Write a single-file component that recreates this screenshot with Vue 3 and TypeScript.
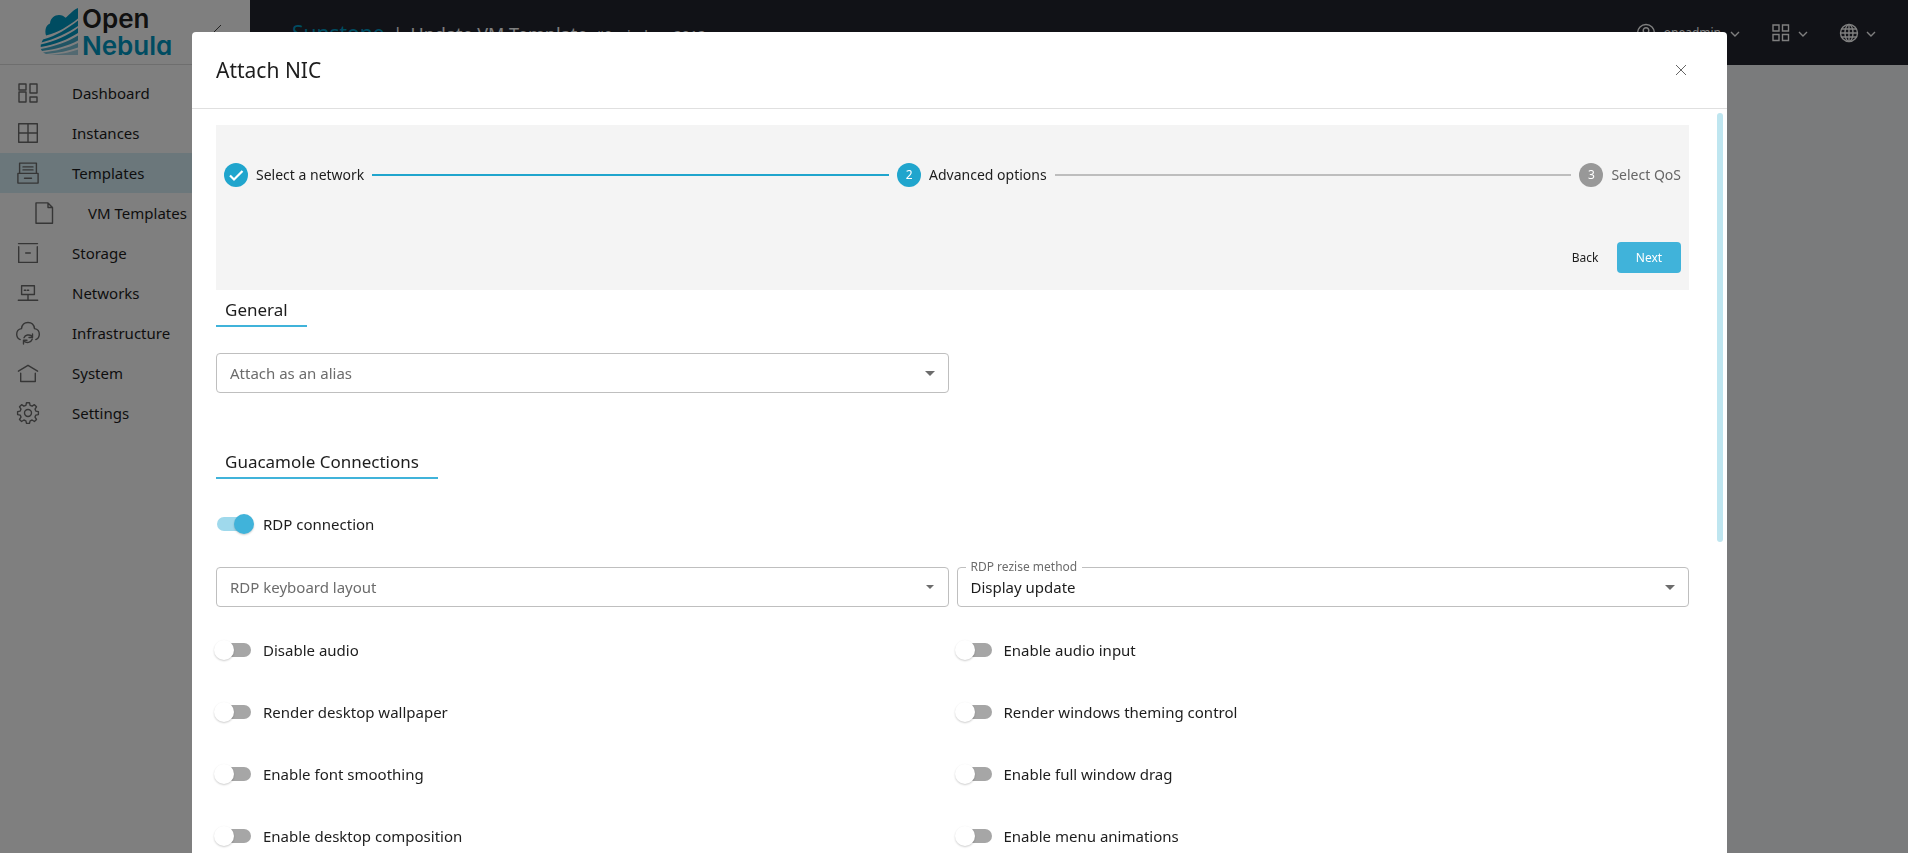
<script setup lang="ts">
import { ref } from 'vue'

interface NavItem {
  label: string
  icon: string
  selected?: boolean
  child?: boolean
}

const nav: NavItem[] = [
  { label: 'Dashboard', icon: 'dashboard' },
  { label: 'Instances', icon: 'instances' },
  { label: 'Templates', icon: 'templates', selected: true },
  { label: 'VM Templates', icon: 'page', child: true },
  { label: 'Storage', icon: 'storage' },
  { label: 'Networks', icon: 'networks' },
  { label: 'Infrastructure', icon: 'infrastructure' },
  { label: 'System', icon: 'system' },
  { label: 'Settings', icon: 'settings' },
]

const icons: Record<string, string> = {
  dashboard: 'M3 3h7v6H3zM3 11h7v10H3zM14 3h7v9h-7zM14 16h7v5h-7z',
  instances: 'M2.7 2.7h18.6v18.6H2.7zM12 2.7v18.6M2.7 12h18.6',
  templates: 'M1.9 12.4h20.2v9.7H1.9zM3.6 12.4V2.1h16.8v10.3M7 5.9h10M7 8.9h10M8.5 17.2h7',
  page: 'M4 1.9h12l4.5 4.6v15.7H4zM16 1.9v4.6h4.5',
  storage: 'M2.5 2.6h19M2.7 5.8v15.6h18.6V5.8M9.7 12h4.6',
  networks: 'M5.6 4.7h12.8v8.8H5.6zM12 13.5v5.7M2.3 19.2h19.4M8.3 9.2h1.4M11.3 9.2h1.4',
  infrastructure:
    'M4.2 18.6C1.8 17.6.7 15.4.7 13.2c0-3 2-5.1 4.8-5.6C6 3.8 8.7 1.5 12 1.5s6 2.3 6.500 6.100c2.800.5 4.800 2.600 4.800 5.600 0 2.200-1.100 4.400-3.500 5.400M8 16.800c1.200-3 5.300-3.800 7.900-1.600M16.500 13v3.500H13M16.200 18.200c-1.200 3.400-5.600 4.300-8.300 1.800M7.500 23v-3.800H11',
  system: 'M2.4 10.2 12 4.3l9.6 5.9M4.7 12.3v8.2h14.6v-8.2',
  settings:
    'M10.5 1.7h3l.6 2.7 2 .8 2.300-1.500 2.100 2.100L19 8.100l.8 2 2.600.5v3l-2.600.5-.8 2 1.500 2.300-2.100 2.100-2.300-1.500-2 .8-.6 2.600h-3l-.6-2.600-2-.8-2.300 1.500-2.100-2.100L5 16.100l-.8-2-2.600-.5v-3l2.600-.5.8-2-1.500-2.300 2.100-2.100 2.300 1.500 2-.8zM12 8.500a3.500 3.500 0 1 0 0 7 3.500 3.500 0 0 0 0-7z',
}

const rdp = ref(true)
const aliasOf = ref('')
const keyboard = ref('')
const resize = ref('display-update')

const options = ref([
  { id: 'disable-audio', label: 'Disable audio', on: false },
  { id: 'audio-input', label: 'Enable audio input', on: false },
  { id: 'wallpaper', label: 'Render desktop wallpaper', on: false },
  { id: 'theming', label: 'Render windows theming control', on: false },
  { id: 'font-smoothing', label: 'Enable font smoothing', on: false },
  { id: 'window-drag', label: 'Enable full window drag', on: false },
  { id: 'composition', label: 'Enable desktop composition', on: false },
  { id: 'menu-animations', label: 'Enable menu animations', on: false },
])
</script>

<template>
  <div class="app">
    <aside class="sidebar">
      <div class="brand">
        <svg class="brand-mark" viewBox="0 0 38 48" aria-hidden="true">
          <path class="c1" d="M6 27.500C4.500 22 6 17 10 15.500 10.500 10 14.500 7 19 7c3 0 5 1.200 6.500 2.800C28.500 8 32 2.500 38 0v10.500C28 18.500 18 24.500 6 27.500z" />
          <path class="c1" d="M3 31.500C16 28 28 20.500 38 12.500v5.500C28 25 15 31 1.500 34.500z" />
          <path class="c1" d="M.8 36.500C14 33.500 28 27.500 38 20v5C28 31.500 15 36.500.7 39z" />
          <path class="c2" d="M.8 41C14 38.500 28 34 38 27.500v5C28 38 15 41.500 2 43z" />
          <path class="c3" d="M3 44.500C16 43 28 40 38 35v4.500C29 43 18 45 6 46z" />
          <path class="c4" d="M8 47c11-.5 22-2.500 30-5.500V47z" />
        </svg>
        <div class="brand-name"><span>Open</span><span class="brand-accent">Nebula</span></div>
        <button class="collapse" aria-label="Collapse menu">
          <svg width="24" height="24" viewBox="0 0 24 24"><path d="m15 5-7 7 7 7" /></svg>
        </button>
      </div>
      <nav>
        <a v-for="item in nav" :key="item.label" href="#" :class="['nav-item', { selected: item.selected, child: item.child }]">
          <svg width="24" height="24" viewBox="0 0 24 24"><path :d="icons[item.icon]" /></svg>
          <span>{{ item.label }}</span>
        </a>
      </nav>
    </aside>

    <div class="page">
      <header class="topbar">
        <div class="crumbs">
          <span class="product">Sunstone</span><span class="bar">|</span>
          <span class="view">Update VM Template</span><span class="object">#0 windows2012</span>
        </div>
        <div class="tools">
          <button class="tool user">
            <svg width="20" height="20" viewBox="0 0 20 20"><circle cx="10" cy="10" r="8.500" /><circle cx="10" cy="7.500" r="2.800" /><path d="M5 16.500c.5-6 9.500-6 10 0" /></svg>
            <span>oneadmin</span>
            <svg class="chev" width="12" height="12" viewBox="0 0 12 12"><path d="m2 5 4 4 4-4" /></svg>
          </button>
          <button class="tool" aria-label="Zones">
            <svg width="20" height="20" viewBox="0 0 20 20"><path d="M2 2h6v6H2zM11.500 2h6v6h-6zM2 11.500h6v6H2zM11.500 11.500h6v6h-6z" /></svg>
            <svg class="chev" width="12" height="12" viewBox="0 0 12 12"><path d="m2 5 4 4 4-4" /></svg>
          </button>
          <button class="tool" aria-label="Language">
            <svg width="20" height="20" viewBox="0 0 20 20"><circle cx="10" cy="10" r="8.500" /><ellipse cx="10" cy="10" rx="4" ry="8.500" /><path d="M10 1.500v17M1.500 10h17M2.600 6h14.800M2.600 14h14.800" /></svg>
            <svg class="chev" width="12" height="12" viewBox="0 0 12 12"><path d="m2 5 4 4 4-4" /></svg>
          </button>
        </div>
      </header>
    </div>

    <div class="backdrop">
      <section class="dialog" role="dialog" aria-modal="true" aria-labelledby="dialog-title">
        <header class="dialog-head">
          <h1 id="dialog-title">Attach NIC</h1>
          <button class="close" aria-label="Close">
            <svg width="16" height="16" viewBox="0 0 16 16"><path d="m3 3 10 10M13 3 3 13" /></svg>
          </button>
        </header>

        <div class="dialog-body">
          <div class="stepper">
            <ol class="steps">
              <li class="step done">
                <span class="dot"><svg width="24" height="24" viewBox="0 0 24 24"><path d="m6 12.500 4 4L18.500 8" /></svg></span>
                <span>Select a network</span>
              </li>
              <li class="connector active" aria-hidden="true"></li>
              <li class="step"><span class="dot">2</span><span>Advanced options</span></li>
              <li class="connector" aria-hidden="true"></li>
              <li class="step pending"><span class="dot">3</span><span>Select QoS</span></li>
            </ol>
            <div class="actions">
              <button class="back">Back</button>
              <button class="next">Next</button>
            </div>
          </div>

          <h2>General</h2>
          <div class="fields first">
            <div class="field">
              <select v-model="aliasOf" class="empty" aria-label="Attach as an alias">
                <option value="">Attach as an alias</option>
              </select>
              <svg class="arrow" width="24" height="24" viewBox="0 0 24 24"><path d="m7 10 5 5 5-5z" /></svg>
            </div>
          </div>

          <h2>Guacamole Connections</h2>
          <label class="switch rdp">
            <input v-model="rdp" type="checkbox" role="switch" /><span>RDP connection</span>
          </label>

          <div class="fields">
            <div class="field">
              <select v-model="keyboard" class="empty" aria-label="RDP keyboard layout">
                <option value="">RDP keyboard layout</option>
              </select>
              <svg class="arrow" width="24" height="24" viewBox="0 0 24 24"><path d="m8 10 4 4 4-4z" /></svg>
            </div>
            <div class="field">
              <label class="float" for="resize">RDP rezise method</label>
              <select id="resize" v-model="resize">
                <option value="display-update">Display update</option>
              </select>
              <svg class="arrow" width="24" height="24" viewBox="0 0 24 24"><path d="m7 10 5 5 5-5z" /></svg>
            </div>
          </div>

          <div class="switches">
            <label v-for="o in options" :key="o.id" class="switch">
              <input v-model="o.on" type="checkbox" role="switch" /><span>{{ o.label }}</span>
            </label>
          </div>
        </div>
        <div class="scroll-thumb"></div>
      </section>
    </div>
  </div>
</template>

<style>
body {
  margin: 0;
  overflow: hidden;
}
</style>

<style scoped>
.app {
  display: flex;
  height: 100vh;
  overflow: hidden;
  background: #f4f6f8;
  color: #1d1d1d;
  font-family: 'Noto Sans', sans-serif;
  font-size: 15px;
  line-height: 24px;
}
button {
  border: 0;
  padding: 0;
  background: none;
  color: inherit;
  font: inherit;
}
svg {
  flex: none;
  fill: none;
  stroke: currentColor;
}

/* Sidebar */
.sidebar {
  width: 250px;
  flex: none;
  background: #fff;
}
.brand {
  display: flex;
  align-items: center;
  height: 64px;
  padding: 0 20px 0 40px;
  border-bottom: 1px solid #dcdcdc;
}
.brand-mark {
  width: 38px;
  height: 48px;
  margin-right: 4px;
  stroke: none;
}
.c1 { fill: #0098c3; }
.c2 { fill: #3fa9c9; }
.c3 { fill: #79c0d6; }
.c4 { fill: #a6d3e2; }
.brand-name {
  display: flex;
  flex: 1;
  flex-direction: column;
  color: #222;
  font-family: Inter, sans-serif;
  font-size: 26px;
  font-weight: 600;
  font-feature-settings: 'cv11';
  line-height: 27px;
}
.brand-accent {
  color: #0098c3;
}
.collapse svg {
  display: block;
  color: #444;
}
nav {
  padding-top: 8px;
}
.nav-item {
  display: flex;
  align-items: center;
  gap: 32px;
  height: 40px;
  padding-left: 16px;
  color: #1d1d1d;
  text-decoration: none;
}
.nav-item svg {
  color: #6c6c6c;
  stroke-width: 1.4;
  stroke-linejoin: round;
  stroke-linecap: round;
}
.nav-item.selected {
  background: #d6eff7;
}
.nav-item.child {
  padding-left: 32px;
}

/* Top bar */
.page {
  flex: 1;
}
.topbar {
  display: flex;
  align-items: center;
  justify-content: space-between;
  height: 65px;
  padding: 0 31px 0 42px;
  background: #22242e;
  color: #fff;
}
.crumbs {
  display: flex;
  align-items: baseline;
  gap: 8px;
  padding-top: 3px;
  font-size: 18px;
}
.product {
  color: #0098c3;
  font-size: 21px;
}
.object {
  font-size: 14px;
}
.tools {
  display: flex;
  gap: 30px;
}
.tool {
  display: flex;
  align-items: center;
  gap: 6px;
  font-size: 12px;
}
.tool svg {
  stroke-width: 1.4;
}
.user {
  gap: 8px;
}

/* Dialog */
.backdrop {
  position: fixed;
  inset: 0;
  display: flex;
  padding: 32px 181px 0 192px;
  background: rgba(0, 0, 0, 0.5);
}
.dialog {
  position: relative;
  display: flex;
  flex: 1;
  flex-direction: column;
  overflow: hidden;
  border-radius: 4px 4px 0 0;
  background: #fff;
}
.dialog-head {
  display: flex;
  flex: none;
  align-items: center;
  justify-content: space-between;
  height: 76px;
  padding: 0 38px 0 24px;
  border-bottom: 1px solid #e0e0e0;
}
h1 {
  margin: 0;
  font-size: 21px;
  font-weight: 400;
}
.close svg {
  display: block;
  color: #666;
}
.dialog-body {
  flex: 1;
  overflow: hidden;
  padding: 16px 38px 0 24px;
}
.scroll-thumb {
  position: absolute;
  top: 81px;
  right: 4px;
  width: 6px;
  height: 429px;
  border-radius: 3px;
  background: #bfe6f0;
}
.stepper {
  padding: 36px 8px 17px;
  background: #f4f4f4;
}
.steps {
  display: flex;
  align-items: center;
  gap: 8px;
  margin: 0;
  padding: 0;
  list-style: none;
  font-size: 14px;
}
.step {
  display: flex;
  align-items: center;
  gap: 8px;
  height: 28px;
}
.dot {
  display: grid;
  width: 24px;
  height: 24px;
  place-items: center;
  border-radius: 50%;
  background: #20a5cd;
  color: #fff;
  font-size: 12px;
}
.dot svg {
  stroke-width: 2.2;
}
.pending {
  color: #666;
}
.pending .dot {
  background: #989898;
}
.connector {
  flex: 1;
  height: 2px;
  background: #bdbdbd;
}
.connector.active {
  background: #20a5cd;
}
.actions {
  display: flex;
  justify-content: flex-end;
  margin-top: 53px;
}
.back,
.next {
  width: 64px;
  height: 31px;
  border-radius: 4px;
  font-size: 12px;
}
.back {
  margin-right: 0;
}
.next {
  background: #40b3da;
  color: #fff;
}
h2 {
  width: fit-content;
  margin: 0;
  padding: 8px 19px 3px 9px;
  border-bottom: 2px solid #40b3da;
  font-size: 17px;
  font-weight: 400;
}
.fields {
  display: grid;
  grid-template-columns: 1fr 1fr;
  gap: 8px;
}
.fields.first {
  margin: 26px 0 49px;
}
.field {
  position: relative;
}
.field select {
  display: block;
  width: 100%;
  height: 40px;
  padding: 0 36px 0 13px;
  border: 1px solid #bfbfbf;
  border-radius: 4px;
  appearance: none;
  background: #fff;
  color: #1d1d1d;
  font: inherit;
}
.field select.empty {
  color: #6c6c6c;
}
.arrow {
  position: absolute;
  top: 8px;
  right: 7px;
  color: #6c6c6c;
  fill: currentColor;
  stroke: none;
  pointer-events: none;
}
.float {
  position: absolute;
  top: -8px;
  left: 9px;
  padding: 0 5px;
  background: #fff;
  color: #6c6c6c;
  font-size: 12px;
  line-height: 16px;
}

/* Switches */
.switch {
  display: flex;
  align-items: center;
  gap: 12px;
  height: 38px;
}
.rdp {
  margin: 26px 0 24px;
}
.switch input {
  display: flex;
  align-items: center;
  width: 34px;
  height: 14px;
  margin: 0 0 0 1px;
  border-radius: 7px;
  appearance: none;
  background: #a6a6a6;
}
.switch input::before {
  content: '';
  flex: none;
  width: 20px;
  height: 20px;
  margin-left: -3px;
  border-radius: 50%;
  background: #fff;
  box-shadow: 0 1px 2px rgba(0, 0, 0, 0.2);
}
.switch input:checked {
  background: #9fd9ec;
}
.switch input:checked::before {
  margin-left: 17px;
  background: #40b3da;
}
.switches {
  display: grid;
  grid-template-columns: 1fr 1fr;
  gap: 24px 8px;
  padding-top: 24px;
}
</style>
